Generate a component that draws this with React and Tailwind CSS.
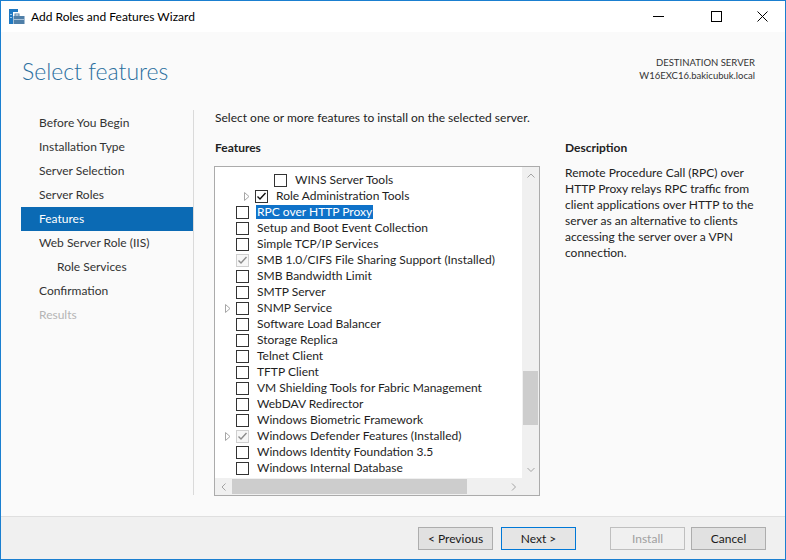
import React from 'react';

const features = [
    { label: 'WINS Server Tools', level: 2 },
    { label: 'Role Administration Tools', level: 1, expand: true, checked: true },
    { label: 'RPC over HTTP Proxy', selected: true },
    { label: 'Setup and Boot Event Collection' },
    { label: 'Simple TCP/IP Services' },
    { label: 'SMB 1.0/CIFS File Sharing Support (Installed)', installed: true },
    { label: 'SMB Bandwidth Limit' },
    { label: 'SMTP Server' },
    { label: 'SNMP Service', expand: true },
    { label: 'Software Load Balancer' },
    { label: 'Storage Replica' },
    { label: 'Telnet Client' },
    { label: 'TFTP Client' },
    { label: 'VM Shielding Tools for Fabric Management' },
    { label: 'WebDAV Redirector' },
    { label: 'Windows Biometric Framework' },
    { label: 'Windows Defender Features (Installed)', expand: true, installed: true },
    { label: 'Windows Identity Foundation 3.5' },
    { label: 'Windows Internal Database' },
];

const steps = [
    { label: 'Before You Begin' },
    { label: 'Installation Type' },
    { label: 'Server Selection' },
    { label: 'Server Roles' },
    { label: 'Features', active: true },
    { label: 'Web Server Role (IIS)' },
    { label: 'Role Services', sub: true },
    { label: 'Confirmation' },
    { label: 'Results', disabled: true },
];

const indent = ['pl-[4px]', 'pl-[23px]', 'pl-[42px]'];

const Check = ({ color }) => (
    <svg width="11" height="11" viewBox="0 0 11 11">
        <path d="M1.5 5.5 L4 8 L9.5 2" fill="none" stroke={color} strokeWidth="1.4" />
    </svg>
);

const Checkbox = ({ checked, installed }) => {
    if (installed) {
        return (
            <span className="w-[13px] h-[13px] border border-[#cfcfcf] bg-[#f7f7f7] flex items-center justify-center shrink-0">
                <Check color="#8c8c8c" />
            </span>
        );
    }
    return (
        <span className="w-[13px] h-[13px] border border-[#333333] bg-white flex items-center justify-center shrink-0">
            {checked && <Check color="#111111" />}
        </span>
    );
};

const Expander = () => (
    <svg width="6" height="9" viewBox="0 0 6 9">
        <path d="M0.5 0.5 L5 4.5 L0.5 8.5 Z" fill="none" stroke="#a6a6a6" strokeWidth="1" />
    </svg>
);

const Chevron = ({ dir }) => {
    const paths = {
        up: 'M0.5 4.5 L4 1 L7.5 4.5',
        down: 'M0.5 1 L4 4.5 L7.5 1',
        left: 'M4.5 0.5 L1 4 L4.5 7.5',
        right: 'M1 0.5 L4.5 4 L1 7.5',
    };
    const horiz = dir === 'left' || dir === 'right';
    return (
        <svg width={horiz ? 6 : 8} height={horiz ? 8 : 6} viewBox={horiz ? '0 0 6 8' : '0 0 8 6'}>
            <path d={paths[dir]} fill="none" stroke="#a3a3a3" strokeWidth="1" />
        </svg>
    );
};

const AppIcon = () => (
    <svg width="16" height="16" viewBox="0 0 16 16">
        <rect x="0" y="0" width="4" height="15" fill="#1f78c1" />
        <rect x="4" y="0" width="5" height="3" fill="#1f78c1" />
        <rect x="1" y="5" width="2" height="1" fill="#9cc7ea" />
        <rect x="1" y="8" width="2" height="1" fill="#9cc7ea" />
        <rect x="6" y="5" width="4" height="2" fill="none" stroke="#4f7fa8" strokeWidth="1" />
        <rect x="4.5" y="7" width="11" height="8" fill="#4f7fa8" />
        <rect x="4.5" y="10" width="11" height="1" fill="#a9c3da" />
    </svg>
);

const Button = ({ children, variant }) => {
    let cls = 'border-[#adadad] bg-[#e1e1e1] text-[#1a1a1a]';
    if (variant === 'default') cls = 'border-[#0078d7] bg-[#e5e5e5] text-[#1a1a1a]';
    if (variant === 'disabled') cls = 'border-[#bfbfbf] bg-[#f0f0f0] text-[#a0a0a0]';
    return (
        <div className={`w-[75px] h-[23px] border flex items-center justify-center ${cls}`}>
            {children}
        </div>
    );
};

export default function App() {
    return (
        <div className="w-[786px] h-[560px] border border-[#1a7fd0] bg-[#fafafa] flex flex-col text-[12px] text-[#222222] font-['Segoe_UI',Lato,sans-serif] overflow-hidden">
            {/* title bar */}
            <div className="h-[31px] bg-white flex items-center shrink-0">
                <div className="pl-[8px] pr-[6px] flex items-center">
                    <AppIcon />
                </div>
                <span className="text-[12px] text-black">Add Roles and Features Wizard</span>
                <div className="ml-auto flex items-center h-full">
                    <div className="w-[46px] h-full flex items-center justify-center">
                        <span className="w-[11px] h-px bg-black" />
                    </div>
                    <div className="w-[46px] h-full ml-[12px] flex items-center justify-center">
                        <span className="w-[11px] h-[11px] border border-black" />
                    </div>
                    <div className="w-[46px] h-full flex items-center justify-center">
                        <svg width="11" height="11" viewBox="0 0 11 11">
                            <path d="M0.5 0.5 L10.5 10.5 M10.5 0.5 L0.5 10.5" stroke="#000" strokeWidth="1" />
                        </svg>
                    </div>
                </div>
            </div>

            {/* header */}
            <div className="h-[74px] shrink-0 flex justify-between pl-[21px] pr-[30px]">
                <div className="pt-[23px] text-[23px] leading-[32px] font-light text-[#2b6f9f]">Select features</div>
                <div className="pt-[24px] text-right text-[9.5px] leading-[13px] text-[#333333]">
                    <div>DESTINATION SERVER</div>
                    <div>W16EXC16.bakicubuk.local</div>
                </div>
            </div>

            {/* body */}
            <div className="h-[410px] shrink-0 flex">
                <div className="w-[192px] pl-[20px] pt-[5px] flex flex-col">
                    {steps.map((s) => (
                        <div
                            key={s.label}
                            className={`h-[24px] flex items-center ${s.sub ? 'pl-[36px]' : 'pl-[18px]'} ${
                                s.active ? 'bg-[#0b6ab4] text-white' : s.disabled ? 'text-[#b5b5b5]' : 'text-[#333333]'
                            }`}
                        >
                            {s.label}
                        </div>
                    ))}
                </div>
                <div className="w-px bg-[#dadada] mt-[4px] mb-[21px]" />

                <div className="flex-1 pl-[20px] flex flex-col">
                    <div className="mt-[4px] h-[16px] leading-[16px] pl-px">Select one or more features to install on the selected server.</div>
                    <div className="mt-[14px] flex">
                        <div className="w-[326px] flex flex-col">
                            <div className="h-[16px] leading-[16px] pl-px font-bold">Features</div>
                            <div className="mt-[10px] h-[330px] border border-[#ababab] bg-white grid grid-cols-[1fr_17px] grid-rows-[1fr_17px]">
                                <div className="overflow-hidden pt-[5px]">
                                    {features.map((f) => (
                                        <div key={f.label} className={`h-[16px] flex items-center whitespace-nowrap ${indent[f.level || 0]}`}>
                                            <span className="w-[17px] flex justify-center shrink-0">{f.expand && <Expander />}</span>
                                            <Checkbox checked={f.checked} installed={f.installed} />
                                            <span
                                                className={`ml-[7px] px-px leading-[14px] ${
                                                    f.selected ? 'bg-[#0f72c9] text-white' : 'text-[#1e1e1e]'
                                                }`}
                                            >
                                                {f.label}
                                            </span>
                                        </div>
                                    ))}
                                </div>
                                <div className="bg-[#f0f0f0] flex flex-col items-center">
                                    <div className="h-[17px] flex items-center justify-center">
                                        <Chevron dir="up" />
                                    </div>
                                    <div className="flex-1 w-full relative">
                                        <div className="absolute left-px right-px top-[187px] h-[54px] bg-[#cdcdcd]" />
                                    </div>
                                    <div className="h-[17px] flex items-center justify-center">
                                        <Chevron dir="down" />
                                    </div>
                                </div>
                                <div className="bg-[#f0f0f0] flex items-center">
                                    <div className="w-[17px] h-full flex items-center justify-center">
                                        <Chevron dir="left" />
                                    </div>
                                    <div className="flex-1 h-full relative">
                                        <div className="absolute top-px bottom-px left-0 w-[235px] bg-[#cdcdcd]" />
                                    </div>
                                    <div className="w-[17px] h-full flex items-center justify-center">
                                        <Chevron dir="right" />
                                    </div>
                                </div>
                                <div className="bg-[#f0f0f0]" />
                            </div>
                        </div>
                        <div className="ml-[25px] w-[196px] flex flex-col">
                            <div className="h-[16px] leading-[16px] font-bold">Description</div>
                            <div className="mt-[9px] leading-[16px] text-[#222222]">
                                Remote Procedure Call (RPC) over HTTP Proxy relays RPC traffic from client applications over HTTP to the server as an alternative to clients accessing the server over a VPN connection.
                            </div>
                        </div>
                    </div>
                </div>
            </div>

            {/* footer */}
            <div className="h-[43px] shrink-0 border-t border-[#dfdfdf] bg-[#f0f0f0] flex items-start justify-end pt-[10px] pr-[19px]">
                <Button>&lt; Previous</Button>
                <div className="ml-[8px]">
                    <Button variant="default">Next &gt;</Button>
                </div>
                <div className="ml-[34px]">
                    <Button variant="disabled">Install</Button>
                </div>
                <div className="ml-[6px]">
                    <Button>Cancel</Button>
                </div>
            </div>
        </div>
    );
}
